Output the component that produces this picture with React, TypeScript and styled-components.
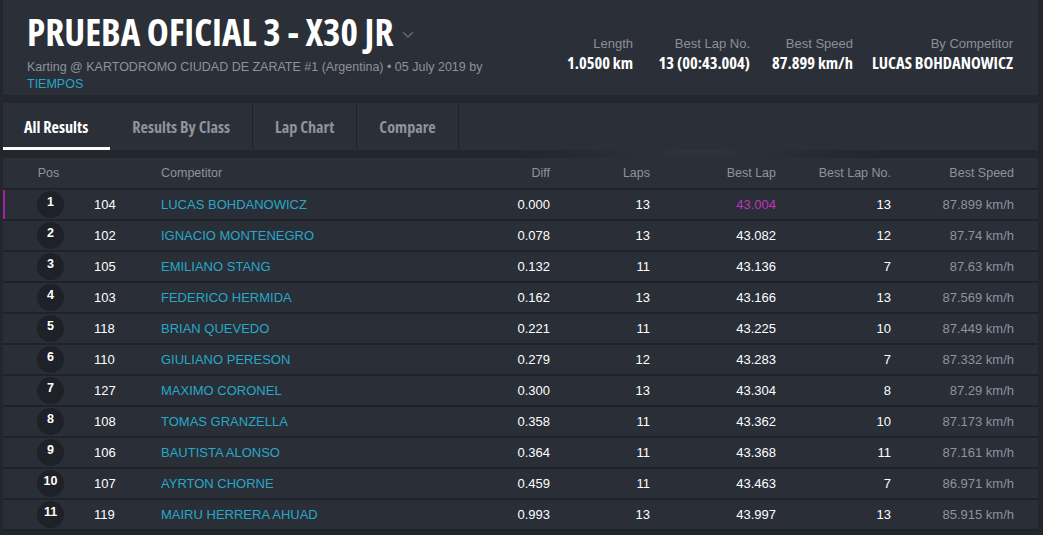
import * as React from 'react';
import styled, { createGlobalStyle } from 'styled-components';

const GlobalStyle = createGlobalStyle`
  html, body {
    margin: 0;
    padding: 0;
    background: #22252c;
  }
  body {
    font-family: 'Liberation Sans', Arial, sans-serif;
  }
`;

const condensed = `
  font-family: 'Open Sans', 'DejaVu Sans Condensed', sans-serif;
  font-stretch: 75%;
  font-weight: 700;
`;

const Page = styled.div`
  width: 1043px;
  height: 535px;
  overflow: hidden;
  box-sizing: border-box;
  padding: 0 5px 0 3px;
  display: flex;
  flex-direction: column;
  gap: 8px;
  background: radial-gradient(ellipse 180px 30px at 700px 150px, #2f343d 0%, rgba(0,0,0,0) 100%), #23262d;
`;

const Header = styled.header`
  height: 95px;
  box-sizing: border-box;
  background: #2b2f38;
  padding: 10px 25px 0 24px;
  display: flex;
  justify-content: space-between;
  align-items: flex-start;
`;

const TitleBlock = styled.div`
  display: flex;
  flex-direction: column;
`;

const Title = styled.h1`
  ${condensed}
  margin: 0;
  font-size: 37.2px;
  line-height: 44px;
  color: #ffffff;
  display: flex;
  align-items: center;
  gap: 8px;
`;

const Chevron = styled.svg`
  width: 14px;
  height: 14px;
  margin-top: 4px;
`;

const Sub = styled.div`
  font-size: 12.5px;
  line-height: 17px;
  color: #8e929a;
  margin-top: 5px;
`;

const Link = styled.a`
  color: #26a7c7;
  text-decoration: none;
`;

const Stats = styled.div`
  display: flex;
  margin-top: 26px;
`;

const Stat = styled.div<{ $w: number }>`
  width: ${(p) => p.$w}px;
  display: flex;
  flex-direction: column;
  align-items: flex-end;
`;

const StatLabel = styled.span`
  font-size: 13px;
  line-height: 16px;
  color: #8b8f97;
`;

const StatValue = styled.span`
  ${condensed}
  font-size: 16.5px;
  line-height: 20px;
  color: #ffffff;
  margin-top: 1px;
  white-space: nowrap;
`;

const Tabs = styled.nav`
  display: flex;
  height: 47px;
  background: #2b2f38;
`;

const Tab = styled.div<{ $active?: boolean }>`
  ${condensed}
  font-size: 16.2px;
  color: ${(p) => (p.$active ? '#ffffff' : '#8f939b')};
  height: 47px;
  box-sizing: border-box;
  padding: 3px 22px 0;
  display: flex;
  align-items: center;
  border-right: ${(p) => (p.$active ? 'none' : '1px solid #1f2228')};
  border-bottom: 3px solid ${(p) => (p.$active ? '#ffffff' : 'transparent')};
  &:first-child {
    padding-left: 21px;
  }
`;

const Table = styled.div`
  width: 1035px;
  display: flex;
  flex-direction: column;
`;

const cols = '91px 67px 289px 100px 100px 126px 115px 123px';

const HeadRow = styled.div`
  display: grid;
  grid-template-columns: ${cols};
  height: 32px;
  align-items: center;
  background: #2b2f38;
  border-bottom: 2px solid #1f2228;
  box-sizing: border-box;
  font-size: 12.5px;
  color: #8f939b;
`;

const Row = styled.div<{ $best?: boolean }>`
  display: grid;
  grid-template-columns: ${cols};
  height: 31px;
  box-sizing: border-box;
  align-items: center;
  background: #2a2e37;
  border-bottom: 2px solid #1f2228;
  box-shadow: ${(p) => (p.$best ? 'inset 2px 0 0 #a3229f' : 'none')};
  font-size: 13px;
  color: #ffffff;
`;

const Cell = styled.div<{ $align?: 'left' | 'right' | 'center'; $color?: string }>`
  text-align: ${(p) => p.$align || 'left'};
  color: ${(p) => p.$color || 'inherit'};
  white-space: nowrap;
`;

const PosCell = styled.div`
  display: flex;
  justify-content: center;
`;

const Circle = styled.span`
  width: 27px;
  height: 27px;
  border-radius: 50%;
  background: #1e2127;
  color: #ffffff;
  font-weight: 700;
  font-size: 12.5px;
  display: flex;
  justify-content: center;
  align-items: flex-start;
  padding-top: 4px;
  box-sizing: border-box;
  margin-left: 4px;
`;

const results = [
  [1, 104, 'LUCAS BOHDANOWICZ', '0.000', 13, '43.004', 13, '87.899 km/h'],
  [2, 102, 'IGNACIO MONTENEGRO', '0.078', 13, '43.082', 12, '87.74 km/h'],
  [3, 105, 'EMILIANO STANG', '0.132', 11, '43.136', 7, '87.63 km/h'],
  [4, 103, 'FEDERICO HERMIDA', '0.162', 13, '43.166', 13, '87.569 km/h'],
  [5, 118, 'BRIAN QUEVEDO', '0.221', 11, '43.225', 10, '87.449 km/h'],
  [6, 110, 'GIULIANO PERESON', '0.279', 12, '43.283', 7, '87.332 km/h'],
  [7, 127, 'MAXIMO CORONEL', '0.300', 13, '43.304', 8, '87.29 km/h'],
  [8, 108, 'TOMAS GRANZELLA', '0.358', 11, '43.362', 10, '87.173 km/h'],
  [9, 106, 'BAUTISTA ALONSO', '0.364', 11, '43.368', 11, '87.161 km/h'],
  [10, 107, 'AYRTON CHORNE', '0.459', 11, '43.463', 7, '86.971 km/h'],
  [11, 119, 'MAIRU HERRERA AHUAD', '0.993', 13, '43.997', 13, '85.915 km/h'],
];

export default function App() {
  return (
    <>
      <GlobalStyle />
      <Page>
        <Header>
          <TitleBlock>
            <Title>
              PRUEBA OFICIAL 3 - X30 JR
              <Chevron viewBox="0 0 14 14" fill="none" stroke="#5d626b" strokeWidth="1.6">
                <path d="M2 5l5 5 5-5" />
              </Chevron>
            </Title>
            <Sub>
              Karting @ KARTODROMO CIUDAD DE ZARATE #1 (Argentina) • 05 July 2019 by
              <br />
              <Link href="#">TIEMPOS</Link>
            </Sub>
          </TitleBlock>
          <Stats>
            <Stat $w={86}>
              <StatLabel>Length</StatLabel>
              <StatValue>1.0500 km</StatValue>
            </Stat>
            <Stat $w={117}>
              <StatLabel>Best Lap No.</StatLabel>
              <StatValue>13 (00:43.004)</StatValue>
            </Stat>
            <Stat $w={103}>
              <StatLabel>Best Speed</StatLabel>
              <StatValue>87.899 km/h</StatValue>
            </Stat>
            <Stat $w={160}>
              <StatLabel>By Competitor</StatLabel>
              <StatValue>LUCAS BOHDANOWICZ</StatValue>
            </Stat>
          </Stats>
        </Header>
        <Tabs>
          <Tab $active>All Results</Tab>
          <Tab>Results By Class</Tab>
          <Tab>Lap Chart</Tab>
          <Tab>Compare</Tab>
        </Tabs>
        <Table>
          <HeadRow>
            <Cell $align="center">Pos</Cell>
            <Cell />
            <Cell>Competitor</Cell>
            <Cell $align="right">Diff</Cell>
            <Cell $align="right">Laps</Cell>
            <Cell $align="right">Best Lap</Cell>
            <Cell $align="right">Best Lap No.</Cell>
            <Cell $align="right">Best Speed</Cell>
          </HeadRow>
          {results.map((r, i) => (
            <Row key={i} $best={i === 0}>
              <PosCell>
                <Circle>{r[0]}</Circle>
              </PosCell>
              <Cell>{r[1]}</Cell>
              <Cell $color="#27a8c8">{r[2]}</Cell>
              <Cell $align="right">{r[3]}</Cell>
              <Cell $align="right">{r[4]}</Cell>
              <Cell $align="right" $color={i === 0 ? '#c033bd' : undefined}>{r[5]}</Cell>
              <Cell $align="right">{r[6]}</Cell>
              <Cell $align="right" $color="#8f939b">{r[7]}</Cell>
            </Row>
          ))}
        </Table>
      </Page>
    </>
  );
}
